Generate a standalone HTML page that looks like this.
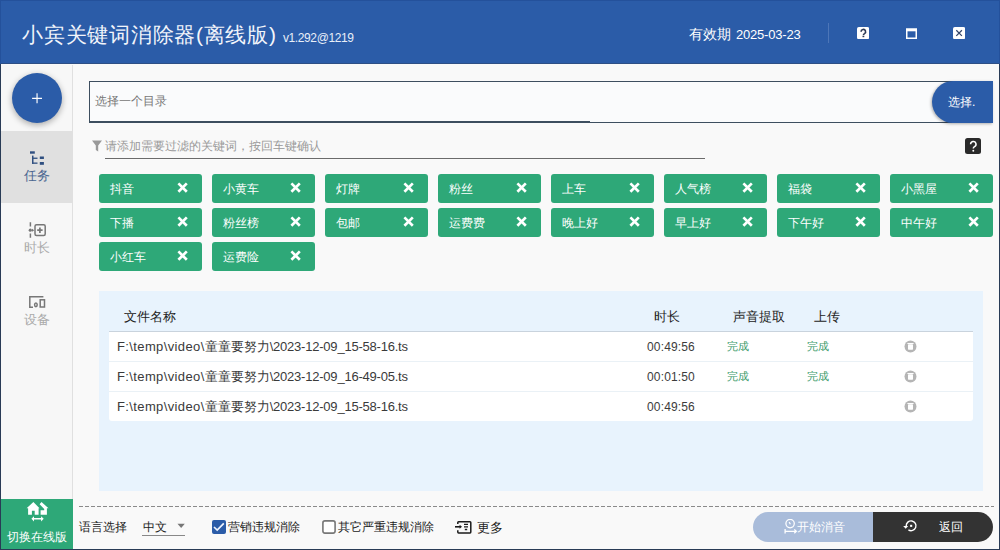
<!DOCTYPE html>
<html><head><meta charset="utf-8">
<style>
*{box-sizing:border-box;margin:0;padding:0}
html,body{width:1000px;height:550px;overflow:hidden}
body{position:relative;font-family:"Liberation Sans",sans-serif;background:#f9f9f9;color:#222}
.abs{position:absolute}
#frame{position:absolute;left:0;top:64px;width:1000px;height:486px;border:1px solid rgba(18,38,68,.9);border-top:none;pointer-events:none;z-index:50}#hframe{position:absolute;left:0;top:0;width:1000px;height:64px;border:1px solid #24519b;border-bottom:none;z-index:49}
#hdr{position:absolute;left:0;top:0;width:1000px;height:64px;background:#2b5ca8;border-bottom:1px solid #2e4f85}
#title{left:22px;top:19px;font-size:21px;letter-spacing:0.75px;color:#fff;white-space:nowrap;line-height:32px;color:#f2f5fb}
#ver{left:283px;top:30px;font-size:12px;letter-spacing:-0.4px;color:#e8eef8;line-height:16px;white-space:nowrap}
#exp1{left:689px;top:25px;font-size:14px;color:#fff;line-height:18px;white-space:nowrap}
#exp2{left:736px;top:26px;font-size:13px;letter-spacing:-0.2px;color:#fff;line-height:18px;white-space:nowrap}
#sep{left:828px;top:23px;width:1px;height:20px;background:#4d76b8}
#side{left:1px;top:65px;width:72px;height:484px;background:#f7f7f7;border-right:1px solid #e0e0e0}
#fab{left:12px;top:73px;width:50px;height:50px;border-radius:50%;background:#2b5ca8;box-shadow:0 2px 6px rgba(0,0,0,.32)}
.navsel{left:1px;top:131px;width:71px;height:72px;background:#e0e0e0}
.navtxt{font-size:13px;line-height:14px;white-space:nowrap}
#green{left:1px;top:499px;width:72px;height:50px;background:#2ea878}

#inp{left:89px;top:81px;width:904px;height:42px;border:1px solid #3d4e5f;border-bottom:1px solid #3d4e5f;background:#fafbfc}
#inpbar{left:89px;top:121px;width:501px;height:2px;background:#3d4e5f}
#inptxt{left:95px;top:94px;font-size:12px;line-height:14px;color:#777;white-space:nowrap}
#selbtn{left:932px;top:81px;width:61px;height:42px;background:#2b5ca8;border-radius:21px 0 0 21px;box-shadow:-1px 1px 3px rgba(0,0,0,.3)}
#seltxt{left:948px;top:95px;font-size:12px;line-height:14px;color:#fff;white-space:nowrap}
#filt{left:105px;top:139px;font-size:12px;line-height:14px;color:#999;white-space:nowrap}
#fline{left:105px;top:158px;width:600px;height:1px;background:#6b6b6b}
#help2{left:965px;top:138px;width:16px;height:16px;border-radius:2.5px;background:#2a2a2a}
.tag{position:absolute;width:103px;height:29px;background:#2ea878;border-radius:3px;color:#fff;font-size:12px;line-height:30px;padding-left:11px;white-space:nowrap}
.tag svg{position:absolute;left:78.4px;top:8.4px}

#panel{left:99px;top:291px;width:884px;height:200px;background:#e8f3fd}
#tbl{left:109px;top:331px;width:864px;height:90px;background:#fff;border-radius:0 0 3px 3px;border-top:1px solid #c9d3dd}
.th{position:absolute;top:309px;font-size:13px;line-height:15px;color:#222;white-space:nowrap}
.rowl{position:absolute;left:109px;width:864px;height:1px;background:#eaf1f6}
.path{position:absolute;left:117px;font-size:13px;line-height:15px;color:#3a3a3a;white-space:nowrap}.l1{letter-spacing:.38px}.l2{letter-spacing:-.22px}
.dur{position:absolute;left:647px;font-size:12px;line-height:15px;color:#3c3c3c;white-space:nowrap;letter-spacing:0.15px}
.ok{position:absolute;font-size:11px;line-height:13px;color:#3a9a6a;white-space:nowrap}
.trash{position:absolute;left:904px}
#dash{left:79px;top:506px;width:915px;height:1px;background:repeating-linear-gradient(90deg,#8a8a8a 0 4px,transparent 4px 6px)}
#switch{left:7px;top:530px;font-size:12px;line-height:14px;color:#fff;white-space:nowrap}

.bt{position:absolute;font-size:12px;line-height:14px;color:#222;white-space:nowrap}
#langline{left:142px;top:535px;width:43px;height:1px;background:#888}
#startbtn{left:753px;top:512px;width:121px;height:30px;background:#a9bcda;border-radius:15px 0 0 15px}
#backbtn{left:873px;top:512px;width:120px;height:30px;background:#333;border-radius:0 15px 15px 0}
</style></head><body>
<div id="hdr"></div>
<div id="title" class="abs">小宾关键词消除器(离线版)</div>
<div id="ver" class="abs">v1.292@1219</div>
<div id="exp1" class="abs">有效期</div>
<div id="exp2" class="abs">2025-03-23</div>
<div id="sep" class="abs"></div>
<svg class="abs" style="left:856.8px;top:26.8px" width="12.2" height="12.2" viewBox="0 0 12.2 12.2"><rect x="0" y="0" width="12.2" height="12.2" rx="1.8" fill="#fff"/><path d="M4.1 4.8A2.25 2.25 0 1 1 7.5 6.6Q6.4 7.2 6.4 8.3" fill="none" stroke="#2d3a55" stroke-width="1.6"/><rect x="5.5" y="8.9" width="1.8" height="1.3" fill="#2d3a55"/></svg>
<svg class="abs" style="left:905.5px;top:27.5px" width="11" height="11" viewBox="0 0 11 11"><rect x="0.75" y="1.25" width="9.5" height="9" fill="none" stroke="#fff" stroke-width="1.5"/><rect x="0" y="0.5" width="11" height="2.8" fill="#fff"/></svg>
<svg class="abs" style="left:952.8px;top:26.8px" width="12.2" height="12.2" viewBox="0 0 12.2 12.2"><rect x="0" y="0" width="12.2" height="12.2" rx="1.8" fill="#fff"/><path d="M3.3 3.3L8.9 8.9M8.9 3.3L3.3 8.9" stroke="#34466a" stroke-width="1.25"/></svg>


<div id="side" class="abs"></div>
<div id="fab" class="abs"></div>
<div class="abs navsel"></div>
<div class="abs navtxt" style="left:24px;top:169px;color:#4a6690">任务</div>
<div class="abs navtxt" style="left:24px;top:241px;color:#aaa">时长</div>
<div class="abs navtxt" style="left:24px;top:313px;color:#aaa">设备</div>
<div id="green" class="abs"></div>
<svg class="abs" style="left:0;top:0" width="72" height="550" viewBox="0 0 72 550">
 <path d="M32.1 98.3H42M37.05 93.3V103.3" stroke="#fff" stroke-width="1.15"/>
 <g fill="#2f4f80">
  <rect x="30" y="151.3" width="4.8" height="2.4"/>
  <rect x="32" y="155.6" width="1.5" height="8.2"/>
  <rect x="32" y="157.6" width="5.5" height="1.3"/>
  <rect x="32" y="162.5" width="5.5" height="1.3"/>
  <rect x="39.8" y="156.5" width="4.1" height="2.5"/>
  <rect x="39.8" y="162" width="4.1" height="2.8"/>
 </g>
 <g fill="none" stroke="#777" stroke-width="1.5">
  <path d="M30.4 222.3V226.6M30.4 233.5V237.8"/>
  <rect x="35" y="224.8" width="10.2" height="10.8" rx="1.5"/>
  <path d="M37.2 230.2H42.6M39.9 227.4V233" stroke-width="1.7"/>
  <path d="M43.4 296.8H29.8V307.2H33"/>
  <rect x="40.2" y="299.8" width="4.3" height="7.2"/>
  <ellipse cx="35.9" cy="304.8" rx="1.3" ry="1.9"/>
 </g>
 <circle cx="30.3" cy="230.2" r="1.6" fill="#777"/>
 <path d="M32 228.7L34.2 230.2L32 231.7Z" fill="#777"/>
 <g fill="#fff">
  <path d="M33.4 502L26.6 508.3H28.1V514.8H31.9V510.7H34.7V514.8H38.6V508.3H39.5Z"/>
  <path d="M41.5 502L39.6 504.2L44.2 508.9V510.2H40.6V514.8H46.9V508.3H48.5Z"/>
  <path d="M31.4 518.8L34 516.2V518H41.1V516.2L43.7 518.8L41.1 521.4V519.6H34V521.4Z"/>
 </g>
</svg>



<div id="inp" class="abs"></div>
<div id="inpbar" class="abs"></div>
<div id="inptxt" class="abs">选择一个目录</div>
<div id="selbtn" class="abs"></div>
<div id="seltxt" class="abs">选择.</div>
<svg class="abs" style="left:91px;top:139px" width="12" height="14" viewBox="0 0 12 14"><path d="M1 1.5H11L7.2 6.5V12.5L4.8 11V6.5Z" fill="#999"/></svg>
<div id="filt" class="abs">请添加需要过滤的关键词，按回车键确认</div>
<div id="fline" class="abs"></div>
<div id="help2" class="abs"></div>
<svg class="abs" style="left:965px;top:138px" width="16" height="16" viewBox="0 0 16 16"><path d="M5.6 6.3A2.7 2.7 0 1 1 9.6 8.6Q8.3 9.3 8.3 10.6" fill="none" stroke="#fff" stroke-width="1.5"/><circle cx="8.3" cy="12.7" r="0.95" fill="#fff"/></svg>
<div class="tag" style="left:99px;top:174px">抖音<svg width="11" height="11" viewBox="0 0 11 11"><path d="M1.4 1.4L9.8 9.8M9.8 1.4L1.4 9.8" stroke="#fff" stroke-width="2.7"/></svg></div>
<div class="tag" style="left:212px;top:174px">小黄车<svg width="11" height="11" viewBox="0 0 11 11"><path d="M1.4 1.4L9.8 9.8M9.8 1.4L1.4 9.8" stroke="#fff" stroke-width="2.7"/></svg></div>
<div class="tag" style="left:325px;top:174px">灯牌<svg width="11" height="11" viewBox="0 0 11 11"><path d="M1.4 1.4L9.8 9.8M9.8 1.4L1.4 9.8" stroke="#fff" stroke-width="2.7"/></svg></div>
<div class="tag" style="left:438px;top:174px">粉丝<svg width="11" height="11" viewBox="0 0 11 11"><path d="M1.4 1.4L9.8 9.8M9.8 1.4L1.4 9.8" stroke="#fff" stroke-width="2.7"/></svg></div>
<div class="tag" style="left:551px;top:174px">上车<svg width="11" height="11" viewBox="0 0 11 11"><path d="M1.4 1.4L9.8 9.8M9.8 1.4L1.4 9.8" stroke="#fff" stroke-width="2.7"/></svg></div>
<div class="tag" style="left:664px;top:174px">人气榜<svg width="11" height="11" viewBox="0 0 11 11"><path d="M1.4 1.4L9.8 9.8M9.8 1.4L1.4 9.8" stroke="#fff" stroke-width="2.7"/></svg></div>
<div class="tag" style="left:777px;top:174px">福袋<svg width="11" height="11" viewBox="0 0 11 11"><path d="M1.4 1.4L9.8 9.8M9.8 1.4L1.4 9.8" stroke="#fff" stroke-width="2.7"/></svg></div>
<div class="tag" style="left:890px;top:174px">小黑屋<svg width="11" height="11" viewBox="0 0 11 11"><path d="M1.4 1.4L9.8 9.8M9.8 1.4L1.4 9.8" stroke="#fff" stroke-width="2.7"/></svg></div>
<div class="tag" style="left:99px;top:208px">下播<svg width="11" height="11" viewBox="0 0 11 11"><path d="M1.4 1.4L9.8 9.8M9.8 1.4L1.4 9.8" stroke="#fff" stroke-width="2.7"/></svg></div>
<div class="tag" style="left:212px;top:208px">粉丝榜<svg width="11" height="11" viewBox="0 0 11 11"><path d="M1.4 1.4L9.8 9.8M9.8 1.4L1.4 9.8" stroke="#fff" stroke-width="2.7"/></svg></div>
<div class="tag" style="left:325px;top:208px">包邮<svg width="11" height="11" viewBox="0 0 11 11"><path d="M1.4 1.4L9.8 9.8M9.8 1.4L1.4 9.8" stroke="#fff" stroke-width="2.7"/></svg></div>
<div class="tag" style="left:438px;top:208px">运费费<svg width="11" height="11" viewBox="0 0 11 11"><path d="M1.4 1.4L9.8 9.8M9.8 1.4L1.4 9.8" stroke="#fff" stroke-width="2.7"/></svg></div>
<div class="tag" style="left:551px;top:208px">晚上好<svg width="11" height="11" viewBox="0 0 11 11"><path d="M1.4 1.4L9.8 9.8M9.8 1.4L1.4 9.8" stroke="#fff" stroke-width="2.7"/></svg></div>
<div class="tag" style="left:664px;top:208px">早上好<svg width="11" height="11" viewBox="0 0 11 11"><path d="M1.4 1.4L9.8 9.8M9.8 1.4L1.4 9.8" stroke="#fff" stroke-width="2.7"/></svg></div>
<div class="tag" style="left:777px;top:208px">下午好<svg width="11" height="11" viewBox="0 0 11 11"><path d="M1.4 1.4L9.8 9.8M9.8 1.4L1.4 9.8" stroke="#fff" stroke-width="2.7"/></svg></div>
<div class="tag" style="left:890px;top:208px">中午好<svg width="11" height="11" viewBox="0 0 11 11"><path d="M1.4 1.4L9.8 9.8M9.8 1.4L1.4 9.8" stroke="#fff" stroke-width="2.7"/></svg></div>
<div class="tag" style="left:99px;top:242px">小红车<svg width="11" height="11" viewBox="0 0 11 11"><path d="M1.4 1.4L9.8 9.8M9.8 1.4L1.4 9.8" stroke="#fff" stroke-width="2.7"/></svg></div>
<div class="tag" style="left:212px;top:242px">运费险<svg width="11" height="11" viewBox="0 0 11 11"><path d="M1.4 1.4L9.8 9.8M9.8 1.4L1.4 9.8" stroke="#fff" stroke-width="2.7"/></svg></div>

<div id="switch" class="abs">切换在线版</div>
<div id="panel" class="abs"></div>
<div id="tbl" class="abs"></div>
<div class="th" style="left:124px">文件名称</div>
<div class="th" style="left:654px">时长</div>
<div class="th" style="left:733px">声音提取</div>
<div class="th" style="left:814px">上传</div>
<div class="rowl" style="top:361px"></div>
<div class="rowl" style="top:391px"></div>
<div class="path" style="top:339px"><span class="l1">F:\temp\video\</span>童童要努力<span class="l2">\2023-12-09_15-58-16.ts</span></div><div class="dur" style="top:340px">00:49:56</div><div class="ok" style="left:727px;top:340px">完成</div><div class="ok" style="left:807px;top:340px">完成</div><svg class="trash" style="top:340px" width="13" height="13" viewBox="0 0 13 13"><circle cx="6.5" cy="6.5" r="6" fill="#b5b5b5"/><rect x="4" y="4.3" width="5" height="5.4" rx="0.6" fill="#fff"/><rect x="3.4" y="3" width="6.2" height="1" fill="#fff"/></svg>
<div class="path" style="top:369px"><span class="l1">F:\temp\video\</span>童童要努力<span class="l2">\2023-12-09_16-49-05.ts</span></div><div class="dur" style="top:370px">00:01:50</div><div class="ok" style="left:727px;top:370px">完成</div><div class="ok" style="left:807px;top:370px">完成</div><svg class="trash" style="top:370px" width="13" height="13" viewBox="0 0 13 13"><circle cx="6.5" cy="6.5" r="6" fill="#b5b5b5"/><rect x="4" y="4.3" width="5" height="5.4" rx="0.6" fill="#fff"/><rect x="3.4" y="3" width="6.2" height="1" fill="#fff"/></svg>
<div class="path" style="top:399px"><span class="l1">F:\temp\video\</span>童童要努力<span class="l2">\2023-12-09_15-58-16.ts</span></div><div class="dur" style="top:400px">00:49:56</div><svg class="trash" style="top:400px" width="13" height="13" viewBox="0 0 13 13"><circle cx="6.5" cy="6.5" r="6" fill="#b5b5b5"/><rect x="4" y="4.3" width="5" height="5.4" rx="0.6" fill="#fff"/><rect x="3.4" y="3" width="6.2" height="1" fill="#fff"/></svg>
<div id="dash" class="abs"></div>

<div class="bt" style="left:79px;top:520px">语言选择</div>
<div class="bt" style="left:143px;top:520px">中文</div>
<svg class="abs" style="left:177px;top:523px" width="9" height="6" viewBox="0 0 9 6"><path d="M0.5 0.8H7.8L4.15 5Z" fill="#777"/></svg>
<div id="langline" class="abs"></div>
<svg class="abs" style="left:212px;top:520px" width="14" height="14" viewBox="0 0 14 14"><rect x="0" y="0" width="14" height="14" rx="2" fill="#2b5ca8"/><path d="M2 7L5.2 10L11.8 3.4" fill="none" stroke="#eef4ff" stroke-width="1.7"/></svg>
<div class="bt" style="left:228px;top:520px">营销违规消除</div>
<svg class="abs" style="left:322px;top:520px" width="14" height="14" viewBox="0 0 14 14"><rect x="0.9" y="0.9" width="12.2" height="12.2" rx="2" fill="#fff" stroke="#777" stroke-width="1.6"/></svg>
<div class="bt" style="left:338px;top:520px">其它严重违规消除</div>
<svg class="abs" style="left:454px;top:520px" width="18" height="14" viewBox="0 0 18 14"><path d="M3.8 4.1V2.6Q3.8 1.8 4.6 1.8H16Q16.8 1.8 16.8 2.6V12.1Q16.8 12.9 16 12.9H4.6Q3.8 12.9 3.8 12.1V10.2" fill="none" stroke="#1a1a1a" stroke-width="1.5"/><path d="M1 6.8H6" stroke="#1a1a1a" stroke-width="1.6"/><path d="M5.6 4.8L8 6.8L5.6 8.8Z" fill="#1a1a1a"/><path d="M10 4.3H14M10 6.8H14M10.8 9.5H13.2" stroke="#1a1a1a" stroke-width="1.3"/></svg>
<div class="bt" style="left:477px;top:521px;font-size:12.5px">更多</div>
<div id="startbtn" class="abs"></div>
<div id="backbtn" class="abs"></div>
<svg class="abs" style="left:783.5px;top:519px" width="14" height="16" viewBox="0 0 14 16"><circle cx="6.1" cy="4.6" r="4.2" fill="none" stroke="#fff" stroke-width="1.25"/><path d="M6.4 5.3L5.1 3.1" stroke="#fff" stroke-width="1.2"/><path d="M1.1 10V14.6M1.1 12.3H12.2M10.3 10.4L12.3 12.3L10.3 14.2" fill="none" stroke="#fff" stroke-width="1.3"/></svg>
<div class="bt" style="left:797px;top:520px;color:#fff">开始消音</div>
<svg class="abs" style="left:903px;top:519px" width="15" height="14" viewBox="0 0 15 14"><path d="M3.2 7A4.9 4.9 0 1 1 5.43 10.9" fill="none" stroke="#fff" stroke-width="1.4"/><path d="M0.2 7H5.2L2.7 9.8Z" fill="#fff"/><rect x="7.1" y="5.8" width="2.1" height="2.1" fill="#fff"/></svg>
<div class="bt" style="left:939px;top:520px;color:#fff">返回</div>
<div id="frame"></div><div id="hframe"></div>
</body></html>
